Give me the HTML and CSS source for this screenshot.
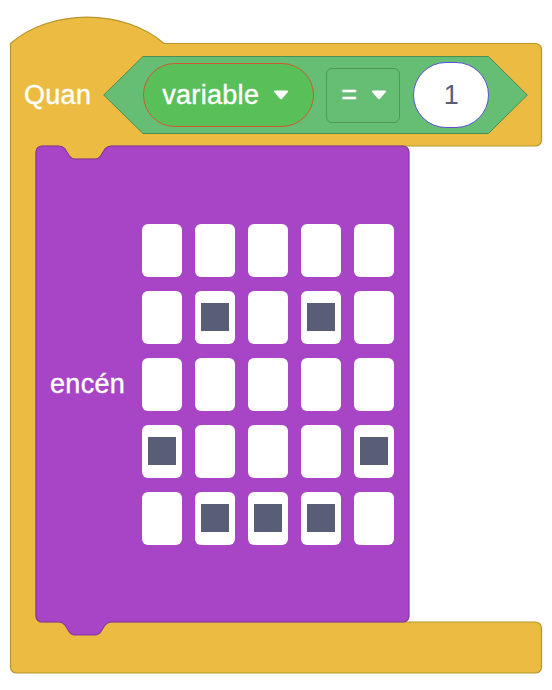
FILE: index.html
```html
<!DOCTYPE html>
<html>
<head>
<meta charset="utf-8">
<link rel="stylesheet" href="styles.css">
</head>
<body>
<div class="stage">
  <svg class="shape" width="552" height="690" viewBox="0 0 552 690">
    <path class="c-block" d="M10.5,43.5 c40,-35.2 113.6,-35.2 153.6,0 H535.5 a6,6 0 0 1 6,6 V140 a6,6 0 0 1 -6,6 H111 c-3,0 -4,1 -6,3 l-4,6.5 c-1.5,2 -3,3.5 -5.5,3.5 h-21 c-2.5,0 -4,-1.5 -5.5,-3.5 l-4,-6.5 c-2,-2 -3,-3 -6,-3 H42 a6,6 0 0 0 -6,6 V616 a6,6 0 0 0 6,6 H535.5 a6,6 0 0 1 6,6 V667 a6,6 0 0 1 -6,6 H16.5 a6,6 0 0 1 -6,-6 Z"/>
    <path class="stack-block" d="M36,152 a6,6 0 0 1 6,-6 H59 c3,0 4,1 6,3 l4,6.5 c1.5,2 3,3.5 5.5,3.5 h21 c2.5,0 4,-1.5 5.5,-3.5 l4,-6.5 c2,-2 3,-3 6,-3 H403 a6,6 0 0 1 6,6 V616 a6,6 0 0 1 -6,6 H111 c-3,0 -4,1 -6,3 l-4,6.5 c-1.5,2 -3,3.5 -5.5,3.5 h-21 c-2.5,0 -4,-1.5 -5.5,-3.5 l-4,-6.5 c-2,-2 -3,-3 -6,-3 H42 a6,6 0 0 1 -6,-6 Z"/>
  </svg>

  <div class="head">
    <span class="label">Quan</span>
    <div class="bool">
      <svg class="bool-bg" width="425" height="78" viewBox="0 0 425 78">
        <path d="M40,0.5 H385.5 L424.3,39 L385.5,77.5 H40 L0.7,39 Z"/>
      </svg>
      <div class="pill">
        <span class="txt">variable</span>
        <svg class="arrow" width="16" height="10" viewBox="0 0 16 10"><path d="M2,0.5 H14 Q16,0.5 14.8,2 L9.2,8.6 Q8,10 6.8,8.6 L1.2,2 Q0,0.5 2,0.5 Z"/></svg>
      </div>
      <div class="dd">
        <span class="txt">=</span>
        <svg class="arrow" width="16" height="10" viewBox="0 0 16 10"><path d="M2,0.5 H14 Q16,0.5 14.8,2 L9.2,8.6 Q8,10 6.8,8.6 L1.2,2 Q0,0.5 2,0.5 Z"/></svg>
      </div>
      <div class="num">1</div>
    </div>
  </div>

  <div class="mouth">
    <span class="label">encén</span>
    <div class="leds">
      <div class="cell"></div><div class="cell"></div><div class="cell"></div><div class="cell"></div><div class="cell"></div>
      <div class="cell"></div><div class="cell on"></div><div class="cell"></div><div class="cell on"></div><div class="cell"></div>
      <div class="cell"></div><div class="cell"></div><div class="cell"></div><div class="cell"></div><div class="cell"></div>
      <div class="cell on"></div><div class="cell"></div><div class="cell"></div><div class="cell"></div><div class="cell on"></div>
      <div class="cell"></div><div class="cell on"></div><div class="cell on"></div><div class="cell on"></div><div class="cell"></div>
    </div>
  </div>
</div>
</body>
</html>
```

FILE: styles.css
```css
html, body {
  margin: 0;
  padding: 0;
  background: #ffffff;
}

body {
  font-family: "Liberation Sans", Arial, sans-serif;
}

.stage {
  position: relative;
  width: 552px;
  height: 690px;
  padding-top: 56px;
  box-sizing: border-box;
  overflow: hidden;
}

.shape {
  position: absolute;
  top: 0;
  left: 0;
}

.c-block {
  fill: #ebbc41;
  stroke: #b8962f;
  stroke-width: 1.2;
}

.stack-block {
  fill: #a845c6;
  stroke: #8636a0;
  stroke-width: 1.2;
}

.head {
  position: relative;
  display: flex;
  align-items: center;
  height: 78px;
  padding-left: 24px;
  gap: 12px;
}

.label,
.txt {
  color: #ffffff;
  font-size: 27px;
  line-height: 1;
  -webkit-text-stroke: 0.4px #ffffff;
  letter-spacing: 0.3px;
}

.bool {
  position: relative;
  width: 425px;
  height: 78px;
  box-sizing: border-box;
  padding: 0 39px 0 40px;
  display: flex;
  align-items: center;
}

.bool-bg {
  position: absolute;
  top: 0;
  left: 0;
}

.bool-bg path {
  fill: #66bd74;
  stroke: #4c8c55;
  stroke-width: 1;
}

.pill,
.dd,
.num {
  position: relative;
  box-sizing: border-box;
  display: flex;
  align-items: center;
  font-size: 27px;
}

.pill {
  width: 171px;
  height: 64px;
  border: 1px solid #d0582e;
  border-radius: 32px;
  background: #59c059;
  color: #ffffff;
  padding-left: 18px;
  gap: 14px;
}

.dd {
  width: 74px;
  height: 55px;
  margin-left: 12px;
  border: 1px solid #4f9858;
  border-radius: 6px;
  background: #66bd74;
  color: #ffffff;
  padding-left: 14px;
  gap: 14px;
}

.arrow path {
  fill: #ffffff;
}

.num {
  width: 76px;
  height: 66px;
  margin-left: 13px;
  border: 1px solid #5a52d4;
  border-radius: 33px;
  background: #ffffff;
  color: #575e75;
  justify-content: center;
}

.mouth {
  position: relative;
  margin: 12px 0 0 36px;
  width: 373px;
  height: 476px;
  box-sizing: border-box;
  padding: 0 15px 0 14px;
  display: flex;
  align-items: center;
  justify-content: space-between;
}

.leds {
  display: grid;
  grid-template-columns: repeat(5, 40px);
  grid-auto-rows: 53px;
  column-gap: 13px;
  row-gap: 14px;
}

.cell {
  background: #ffffff;
  border-radius: 6px;
  display: flex;
  align-items: center;
  justify-content: center;
}

.cell.on::after {
  content: "";
  width: 28px;
  height: 28px;
  background: #585e76;
}
```
